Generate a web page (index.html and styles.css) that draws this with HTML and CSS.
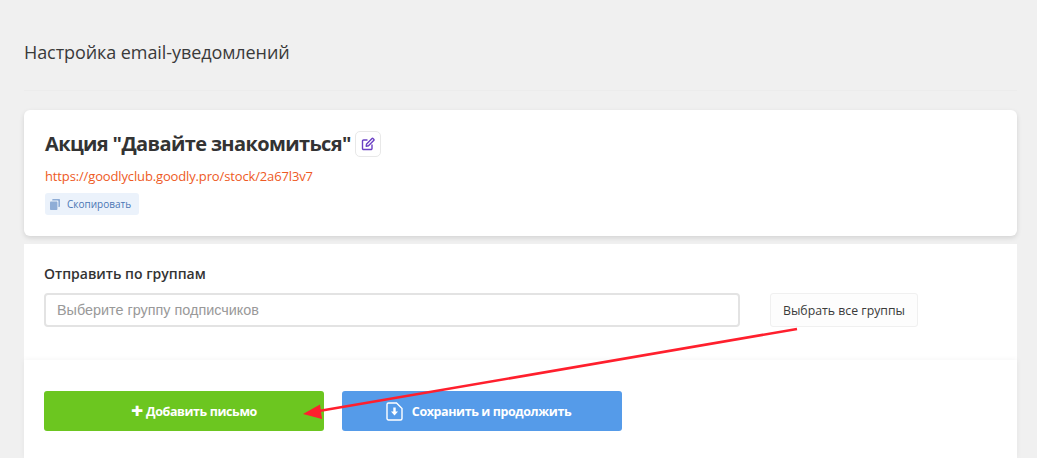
FILE: index.html
```html
<!DOCTYPE html>
<html lang="ru">
<head>
<meta charset="utf-8">
<title>Настройка email-уведомлений</title>
<link rel="stylesheet" href="styles.css">
</head>
<body>
<div class="page">
  <header class="page-head">
    <h1 class="page-title">Настройка email-уведомлений</h1>
  </header>
  <section class="card promo">
    <div class="promo-title-row">
      <h2 class="promo-title">Акция "Давайте знакомиться"</h2>
      <button class="edit-btn" type="button" aria-label="Редактировать">
        <svg width="14" height="14" viewBox="0 0 14 14" fill="none" stroke="#6a3fc4" stroke-width="1.4" stroke-linecap="round" stroke-linejoin="round"><path d="M11 8v3.4a1.1 1.1 0 0 1-1.1 1.1H2.6a1.1 1.1 0 0 1-1.1-1.1V4.1A1.1 1.1 0 0 1 2.6 3H6"/><path d="M5.2 9.2l.4-2.3 5.2-5.2a1 1 0 0 1 1.4 0l.5.5a1 1 0 0 1 0 1.4L7.5 8.8z"/></svg>
      </button>
    </div>
    <a class="promo-link" href="#">https://goodlyclub.goodly.pro/stock/2a67l3v7</a>
    <button class="copy-btn" type="button">
      <svg width="10" height="11" viewBox="0 0 10 11" fill="#8fadd6"><path d="M3 0h6.2a.8.8 0 0 1 .8.8v6.4a.8.8 0 0 1-.8.8H8.4V2.4a.8.8 0 0 0-.8-.8H2.2V.8A.8.8 0 0 1 3 0z"/><rect x="0" y="2.6" width="7.4" height="8.4" rx=".8"/></svg>
      <span>Скопировать</span>
    </button>
  </section>
  <section class="card settings">
    <div class="groups">
      <label class="groups-label">Отправить по группам</label>
      <div class="groups-row">
        <input class="groups-input" type="text" placeholder="Выберите группу подписчиков">
        <button class="all-btn" type="button">Выбрать все группы</button>
      </div>
    </div>
    <div class="actions">
      <button class="action add" type="button"><span class="plus">+</span> Добавить письмо</button>
      <button class="action save" type="button">
        <svg width="17" height="19" viewBox="0 0 17 19" fill="none"><path d="M2.5 1h8L16 6.5v10a1.5 1.5 0 0 1-1.5 1.5h-12A1.5 1.5 0 0 1 1 16.5v-14A1.5 1.5 0 0 1 2.5 1z" stroke="#fff" stroke-width="1.4"/><path d="M7.3 5.5h2.4v4h2.3l-3.5 4-3.5-4h2.3z" fill="#fff"/></svg>
        <span>Сохранить и продолжить</span>
      </button>
    </div>
  </section>
</div>
<svg class="arrow" width="1037" height="458" viewBox="0 0 1037 458" aria-hidden="true"><line x1="797" y1="329" x2="316" y2="411.5" stroke="#ff1f2d" stroke-width="2.6"/><path d="M303 414L320 404.5L322 419z" fill="#ff1f2d"/></svg>
</body>
</html>
```

FILE: styles.css
```css
* { box-sizing: border-box; }
html, body { margin: 0; height: 100%; }
body {
  background: #f0f0f0;
  font-family: "Open Sans", "Noto Sans", sans-serif;
  color: #333;
  overflow: hidden;
  position: relative;
}
.page { padding: 0 20px 0 24px; }
.page-head {
  height: 91px;
  padding-top: 40px;
  border-bottom: 1px solid #ececec;
}
.page-title {
  margin: 0;
  font-size: 18px;
  line-height: 25px;
  font-weight: 400;
  letter-spacing: -0.08px;
  color: #3a3a3a;
}
.card {
  background: #fff;
  border-radius: 6px;
}
.promo {
  margin-top: 19px;
  height: 126px;
  padding: 19px 21px 0;
  box-shadow: 0 2px 5px rgba(0,0,0,.12);
  display: flex;
  flex-direction: column;
  align-items: flex-start;
}
.promo-title-row { display: flex; align-items: center; gap: 4px; height: 30px; }
.promo-title {
  margin: 0;
  font-size: 20px;
  line-height: 30px;
  font-weight: 700;
  letter-spacing: -0.63px;
  color: #333;
}
.edit-btn {
  width: 26px;
  height: 26px;
  padding: 0;
  display: flex;
  align-items: center;
  justify-content: center;
  background: #fff;
  border: 1px solid #e8e8e8;
  border-radius: 5px;
}
.promo-link {
  margin-top: 7px;
  font-size: 13px;
  line-height: 20px;
  letter-spacing: -0.14px;
  color: #ee5a24;
  text-decoration: none;
}
.copy-btn {
  margin-top: 7px;
  height: 22px;
  width: 94px;
  padding: 0 0 0 5px;
  display: flex;
  align-items: center;
  gap: 7px;
  border: 0;
  border-radius: 3px;
  background: #ebf2fb;
  color: #4a76b4;
  font-family: inherit;
  font-size: 10px;
}
.settings {
  margin-top: 8px;
  height: 214px;
  border-radius: 0;
  display: flex;
  flex-direction: column;
}
.groups {
  height: 116px;
  padding: 19px 20px 0;
}
.groups-label {
  display: block;
  font-size: 14px;
  line-height: 22px;
  font-weight: 600;
  color: #333;
}
.groups-row { margin-top: 8px; display: flex; gap: 30px; }
.groups-input {
  width: 696px;
  height: 34px;
  padding: 0 11px;
  border: 2px solid #e3e3e3;
  border-radius: 4px;
  background: #fff;
  font-family: "Liberation Sans", Arial, sans-serif;
  font-size: 14.4px;
  outline: 0;
}
.groups-input::placeholder { color: #999; opacity: 1; }
.all-btn {
  width: 148px;
  height: 34px;
  padding: 0;
  background: #fdfdfd;
  border: 1px solid #f0f0f0;
  border-radius: 3px;
  color: #3a3a3a;
  font-family: inherit;
  font-size: 12.3px;
}
.actions {
  flex: 1;
  padding: 31px 20px 0;
  display: flex;
  gap: 18px;
  background: #fff;
  box-shadow: 0 0 6px rgba(0,0,0,.05);
}
.action {
  height: 40px;
  border: 0;
  border-radius: 3px;
  color: #fff;
  font-family: inherit;
  font-size: 12.5px;
  font-weight: 700;
  letter-spacing: -0.4px;
  display: flex;
  align-items: center;
  justify-content: center;
}
.add { width: 280px; background: #6cc620; gap: 3px; padding-left: 26px; }
.plus { font-size: 21px; font-weight: 800; line-height: 20px; margin-top: -3px; }
.save { width: 280px; background: #559be9; gap: 9px; padding-right: 13px; }
.arrow { position: absolute; left: 0; top: 0; pointer-events: none; }
```
